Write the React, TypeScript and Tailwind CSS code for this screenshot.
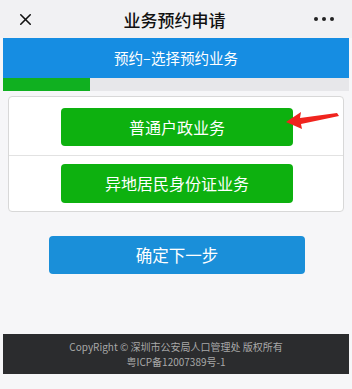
import { X } from "lucide-react";

function App() {
    return (
        <div className="w-[352px] h-[389px] bg-[#f6f6f8] overflow-hidden font-['Noto_Sans_CJK_SC',sans-serif]">
            <header className="h-[38px] bg-[#f1f1f3] flex items-center justify-between px-[16px]">
                <X size={19} strokeWidth={2} className="text-[#111]" />
                <h1 className="text-[17px] leading-none text-[#111] font-medium">业务预约申请</h1>
                <div className="flex gap-[4px] pr-[2px]">
                    <span className="w-[4px] h-[4px] rounded-full bg-[#222]"></span>
                    <span className="w-[4px] h-[4px] rounded-full bg-[#222]"></span>
                    <span className="w-[4px] h-[4px] rounded-full bg-[#222]"></span>
                </div>
            </header>
            <div className="px-[3px]">
                <div className="h-[40px] bg-[#168de2] flex items-center justify-center text-white text-[14.5px]">
                    预约–选择预约业务
                </div>
                <div className="h-[13px] bg-[#e7e7ea]">
                    <div className="h-full w-[87px] bg-[#10b020]"></div>
                </div>
            </div>
            <section className="relative mx-[8px] mt-[5px] h-[116px] bg-white border border-[#d8d8d8] rounded-[4px] flex flex-col">
                <div className="flex-1 flex items-center pl-[52px] pt-[2px] border-b border-[#e2e2e2]">
                    <button className="w-[232px] h-[38px] rounded-[4px] bg-[#0db10f] text-white text-[16px]">普通户政业务</button>
                </div>
                <div className="flex-1 flex items-center pl-[52px]">
                    <button className="w-[232px] h-[39px] rounded-[4px] bg-[#0db10f] text-white text-[16px]">异地居民身份证业务</button>
                </div>
                <svg className="absolute left-[276px] top-[12px]" width="56" height="20" viewBox="0 0 56 20">
                    <path d="M1 13 L16 3 L15 9 L52 4 L54 7 L16 15 L17 20 Z" fill="#f0241e" />
                </svg>
            </section>
            <div className="flex justify-center mt-[24px] pl-[2px]">
                <button className="w-[256px] h-[38px] rounded-[4px] bg-[#1a8fd9] text-white text-[16.5px]">确定下一步</button>
            </div>
            <footer className="mt-[60px] mx-[3px] h-[40px] bg-[#2b2c2e] flex flex-col items-center justify-center text-[10px] leading-[15px] text-[#a8a8a8]">
                <p>CopyRight © 深圳市公安局人口管理处 版权所有</p>
                <p>粤ICP备12007389号-1</p>
            </footer>
        </div>
    );
}

export default App;
